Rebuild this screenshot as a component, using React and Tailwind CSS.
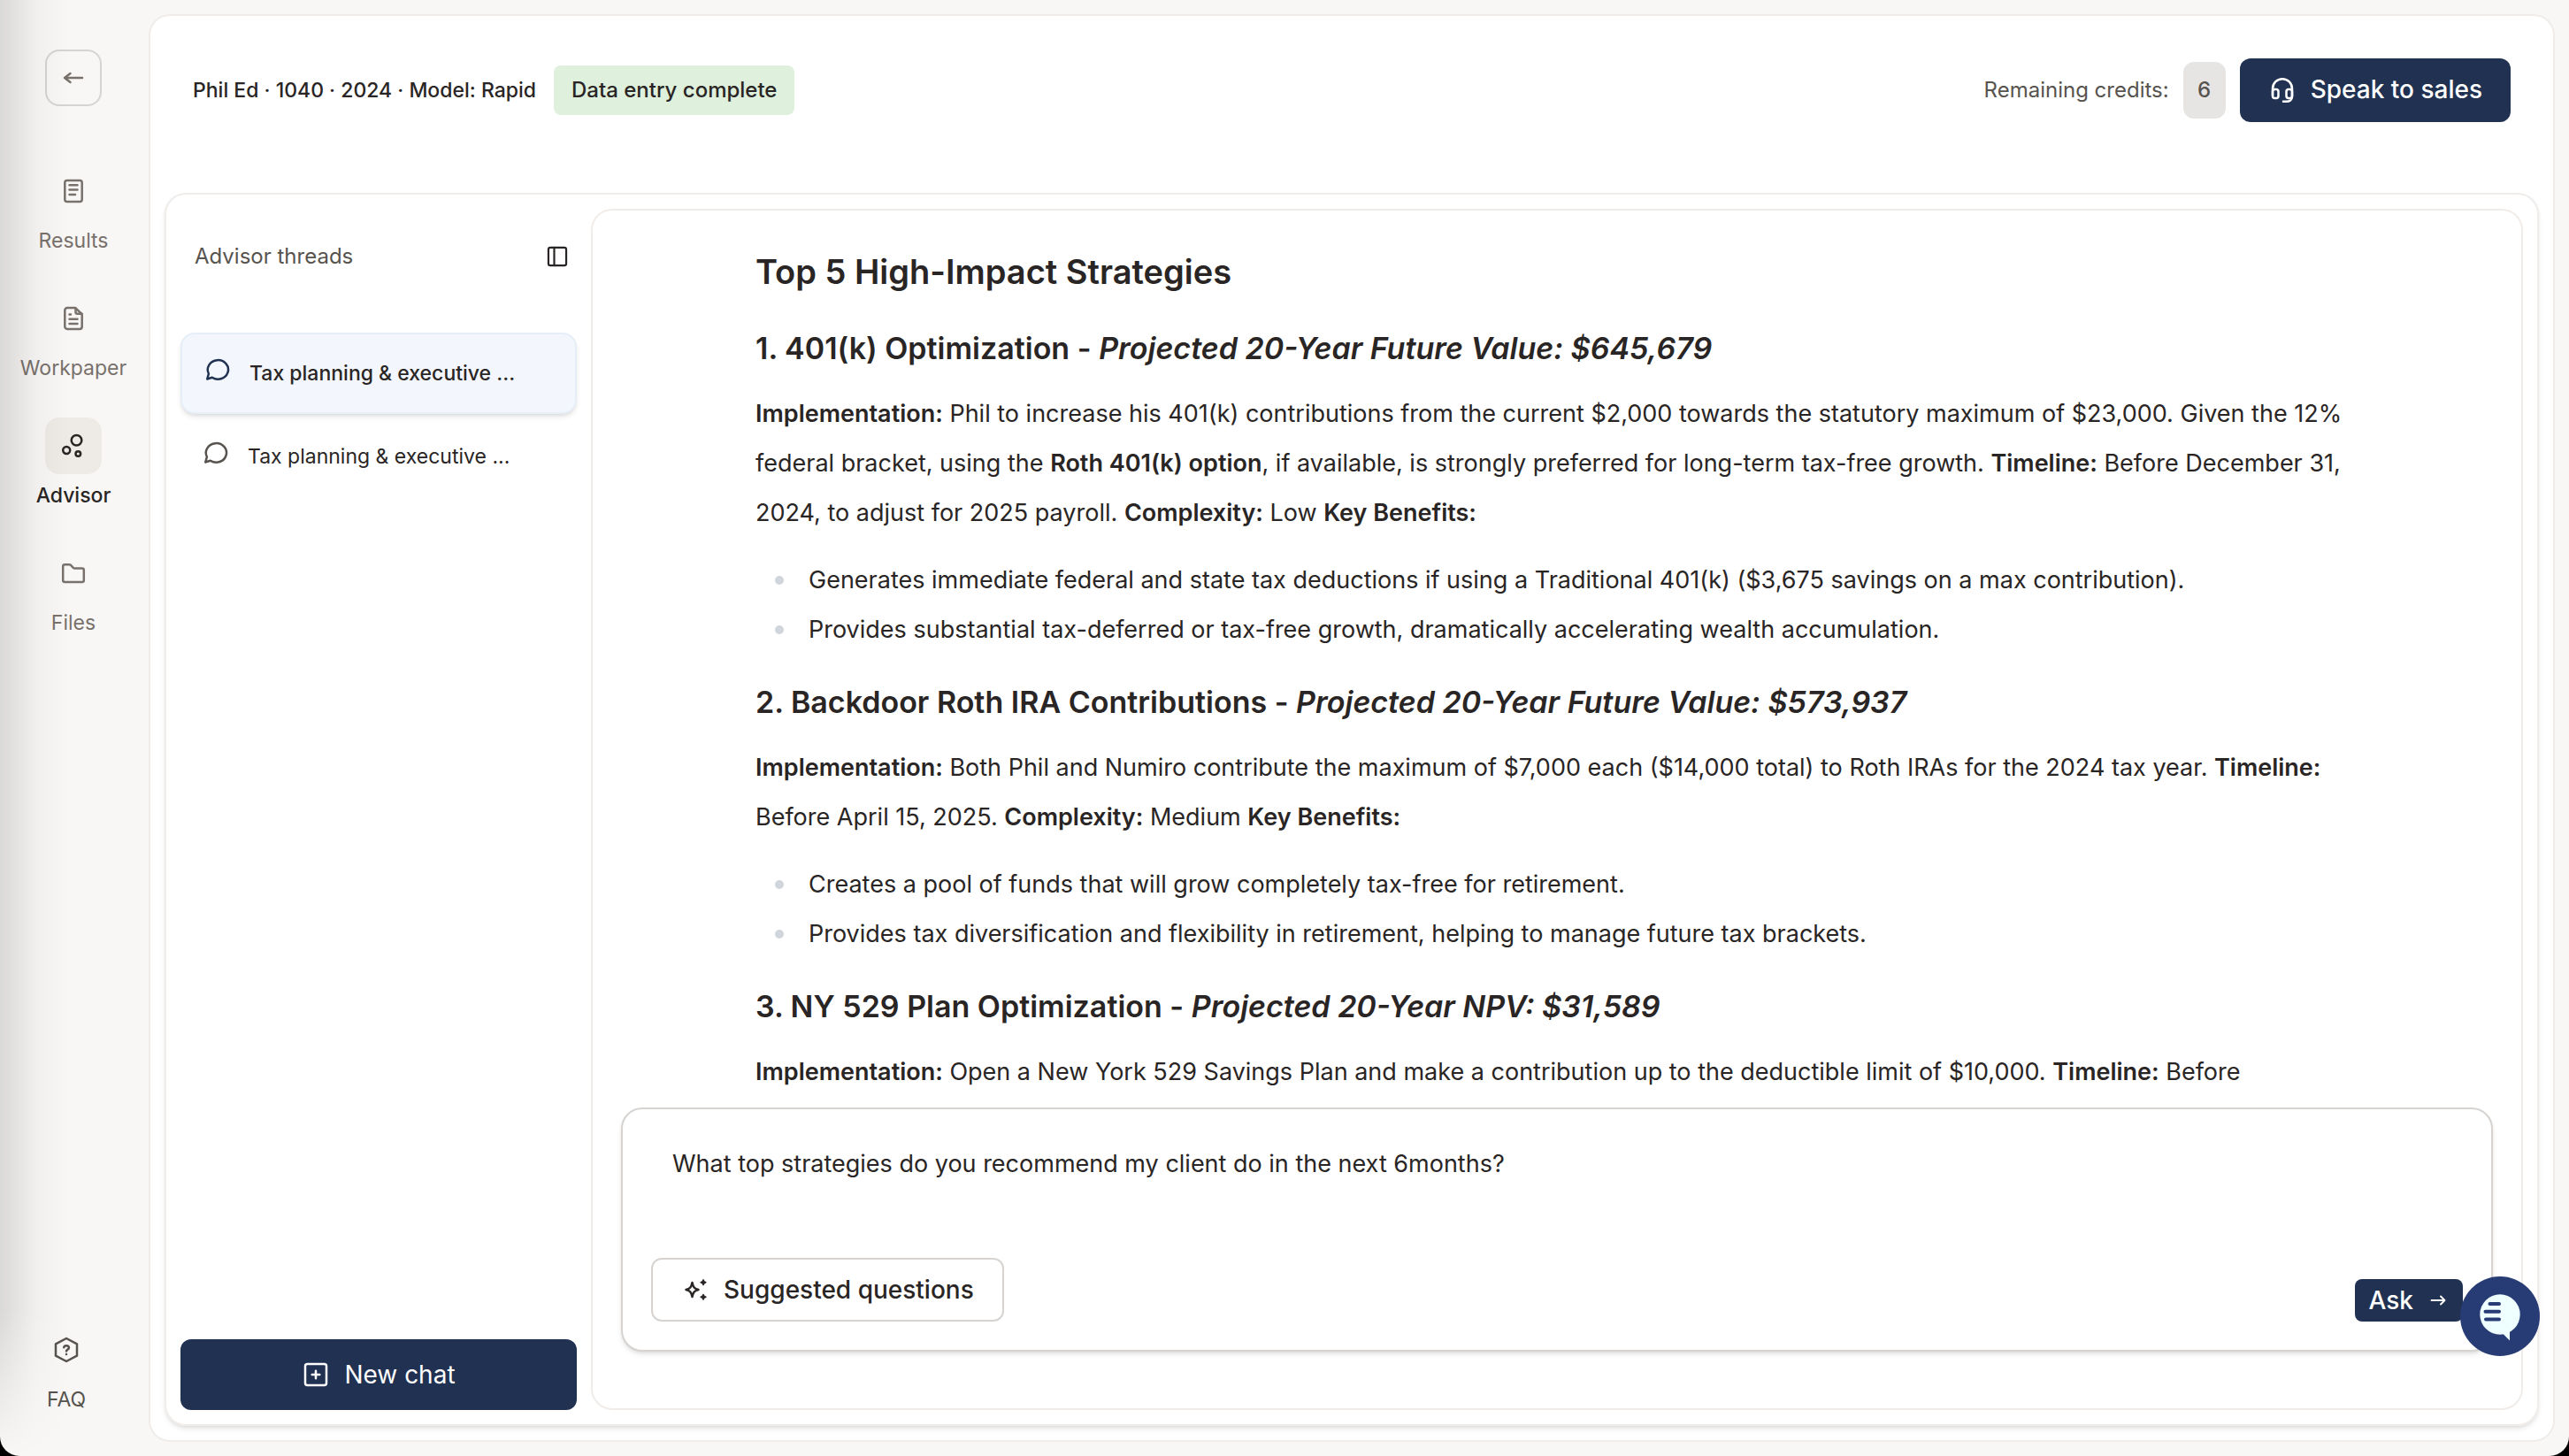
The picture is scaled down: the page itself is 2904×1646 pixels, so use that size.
import { useState } from 'react';

const Icon = ({ children, className = 'size-8' }) => (
  <svg
    viewBox="0 0 32 32"
    fill="none"
    stroke="currentColor"
    strokeWidth="2.5"
    strokeLinecap="round"
    strokeLinejoin="round"
    aria-hidden="true"
    className={`shrink-0 ${className}`}
  >
    {children}
  </svg>
);

const BackIcon = () => (
  <Icon>
    <path d="M26 16H6M12.5 11 6 16l6.5 5" />
  </Icon>
);

const ResultsIcon = () => (
  <Icon>
    <rect x="6.3" y="4" width="19.4" height="24" rx="2.5" />
    <path d="M11.5 9.3h9M11.5 14.6h9M11.5 19.9h6.5" />
  </Icon>
);

const WorkpaperIcon = () => (
  <Icon>
    <path d="M18 4H9a2.7 2.7 0 0 0-2.7 2.7v18.6A2.7 2.7 0 0 0 9 28h14a2.7 2.7 0 0 0 2.7-2.7V11.2L18 4z" />
    <path d="M18.5 4.5v4.2a2 2 0 0 0 2 2h5M11.5 11.5H13M11.5 16.8h9M11.5 22h9" />
  </Icon>
);

const AdvisorIcon = () => (
  <Icon>
    <circle cx="19.5" cy="9.8" r="5.8" />
    <circle cx="8.2" cy="21" r="4" />
    <circle cx="21.3" cy="25" r="2.8" />
  </Icon>
);

const FilesIcon = () => (
  <Icon>
    <path d="M4.2 8.2a2 2 0 0 1 2-2h5.3a2 2 0 0 1 1.3.5l3 3.2a2 2 0 0 0 1.4.6h8.6a2 2 0 0 1 2 2v11.600a2 2 0 0 1-2 2H6.2a2 2 0 0 1-2-2z" />
  </Icon>
);

const FaqIcon = () => (
  <Icon>
    <path d="M16 3 28 9.3v13.4L16 29 4 22.7V9.3z" />
    <path d="M13.2 13.2c.3-1.3 1.4-2 2.8-2 1.6 0 2.9 1 2.9 2.5 0 1.9-2.9 2-2.9 3.8M16 21v.1" />
  </Icon>
);

const HeadsetIcon = () => (
  <Icon>
    <path d="M5 22v-7.5C5 8 9.8 3.2 16 3.2S27 8 27 14.5V23c0 4-3 5.8-6.500 5.8H17" />
    <rect x="5" y="15" width="6.5" height="10" rx="2.5" />
    <rect x="20.5" y="15" width="6.5" height="10" rx="2.5" />
  </Icon>
);

const PanelIcon = () => (
  <Icon className="size-7">
    <rect x="4.5" y="4.5" width="23" height="23" rx="2.5" />
    <path d="M12 4.5v23" />
  </Icon>
);

const ThreadIcon = () => (
  <Icon>
    <path d="M9.8 24.8 4.2 26.5l1.7-6A11.6 10.8 0 1 1 9.8 24.8z" />
  </Icon>
);

const NewChatIcon = () => (
  <Icon>
    <rect x="4" y="4" width="24" height="24" rx="2.5" />
    <path d="M16 11.7v8.6M11.7 16h8.6" />
  </Icon>
);

const SparkleIcon = () => (
  <Icon>
    <path d="M12.5 8c1 5 2.5 7 7 8-4.500 1-6 3-7 8-1-5-2.500-7-7-8 4.500-1 6-3 7-8z" />
    <path
      d="M25 4.8c.4 1.7 1.2 2.5 2.9 2.9-1.7.4-2.5 1.2-2.9 2.9-.4-1.7-1.2-2.5-2.9-2.9 1.7-.4 2.5-1.2 2.9-2.9zM25 21.4c.4 1.7 1.2 2.5 2.9 2.9-1.7.4-2.5 1.2-2.9 2.9-.4-1.7-1.2-2.5-2.9-2.9 1.7-.4 2.5-1.2 2.9-2.9z"
      fill="currentColor"
      strokeWidth="1.5"
    />
  </Icon>
);

const AskIcon = () => (
  <Icon className="size-6">
    <path d="M6 16h20M20 10l6 6-6 6" />
  </Icon>
);

const navItems = [
  { label: 'Results', icon: ResultsIcon },
  { label: 'Workpaper', icon: WorkpaperIcon },
  { label: 'Advisor', icon: AdvisorIcon, active: true },
  { label: 'Files', icon: FilesIcon },
];

const threads = [
  { id: 1, title: 'Tax planning & executive ...' },
  { id: 2, title: 'Tax planning & executive ...' },
];

const Sidebar = () => (
  <aside className="flex w-42 shrink-0 flex-col items-center pt-14 pr-0.5 pb-12 text-[23px] leading-8 text-[#78716c]">
    <button
      type="button"
      aria-label="Back"
      className="flex size-16 items-center justify-center rounded-2xl border-2 border-[#d6d3d1]"
    >
      <BackIcon />
    </button>
    <nav className="mt-16 flex flex-col items-center gap-10">
      {navItems.map(({ label, icon: NavIcon, active }) => (
        <a
          key={label}
          href="#"
          className={`flex flex-col items-center gap-2 ${active ? 'font-medium text-[#292524]' : ''}`}
        >
          <span className={`flex size-16 items-center justify-center rounded-2xl ${active ? 'bg-[#eeebe6]' : ''}`}>
            <NavIcon />
          </span>
          {label}
        </a>
      ))}
    </nav>
    <a href="#" className="mt-auto flex w-[150px] flex-col items-center gap-2 self-start text-[#57534e]">
      <span className="flex size-16 items-center justify-center">
        <FaqIcon />
      </span>
      FAQ
    </a>
  </aside>
);

const Header = () => (
  <header className="flex h-[72px] items-center justify-between px-12 font-medium">
    <div className="flex items-center gap-5">
      <p className="text-[23px]">Phil Ed · 1040 · 2024 · Model: Rapid</p>
      <span className="flex h-14 items-center rounded-lg bg-[#dff0dd] px-5 text-2xl">Data entry complete</span>
    </div>
    <div className="flex items-center gap-4 text-2xl">
      <span className="font-normal text-[#57534e]">Remaining credits:</span>
      <span className="flex h-16 w-12 items-center justify-center rounded-xl bg-[#e7e5e4] text-[#57534e]">6</span>
      <button
        type="button"
        className="flex h-[72px] items-center gap-4 rounded-xl bg-[#203151] px-8 text-[28px] text-white"
      >
        <HeadsetIcon />
        Speak to sales
      </button>
    </div>
  </header>
);

const Threads = () => {
  const [selected, setSelected] = useState(1);

  return (
    <section className="flex w-112 shrink-0 flex-col">
      <div className="flex h-[108px] items-center justify-between pr-2 pl-4">
        <h2 className="text-2xl text-[#57534e]">Advisor threads</h2>
        <button type="button" aria-label="Toggle threads">
          <PanelIcon />
        </button>
      </div>
      <div className="mt-8 flex flex-col gap-1">
        {threads.map((thread) => (
          <button
            key={thread.id}
            type="button"
            onClick={() => setSelected(thread.id)}
            className={`flex items-center gap-5 rounded-2xl px-6 py-7 text-[23px] leading-8 ${
              thread.id === selected ? 'border-2 border-[#e6eef8] bg-[#f3f7fd] font-medium shadow-md' : ''
            }`}
          >
            <span className={`-mt-2 ${thread.id === selected ? 'text-[#203151]' : 'text-[#57534e]'}`}>
              <ThreadIcon />
            </span>
            {thread.title}
          </button>
        ))}
      </div>
      <button
        type="button"
        className="mt-auto flex h-20 items-center justify-center gap-4 rounded-xl bg-[#203151] text-[28px] text-white"
      >
        <NewChatIcon />
        New chat
      </button>
    </section>
  );
};

const StrategyTitle = ({ title, value }) => (
  <h3 className="mt-7 mb-5 text-[34px] leading-[52px] font-semibold first-of-type:mt-8">
    {title} - <em>{value}</em>
  </h3>
);

const Benefits = ({ items }) => (
  <ul className="mt-5 pl-[22px]">
    {items.map((item) => (
      <li
        key={item}
        className="flex items-center gap-7 before:size-2.5 before:shrink-0 before:rounded-full before:bg-gray-300"
      >
        {item}
      </li>
    ))}
  </ul>
);

const Answer = () => (
  <article className="mx-auto w-full max-w-[1812px] pt-10 text-[27px] leading-14 [&_strong]:font-semibold">
    <h2 className="text-[38px] leading-[58px] font-semibold">Top 5 High-Impact Strategies</h2>

    <StrategyTitle title="1. 401(k) Optimization" value="Projected 20-Year Future Value: $645,679" />
    <p>
      <strong>Implementation:</strong> Phil to increase his 401(k) contributions from the current $2,000 towards the
      statutory maximum of $23,000. Given the 12% federal bracket, using the <strong>Roth 401(k) option</strong>, if
      available, is strongly preferred for long-term tax-free growth. <strong>Timeline:</strong> Before December 31,
      2024, to adjust for 2025 payroll. <strong>Complexity:</strong> Low <strong>Key Benefits:</strong>
    </p>
    <Benefits
      items={[
        'Generates immediate federal and state tax deductions if using a Traditional 401(k) ($3,675 savings on a max contribution).',
        'Provides substantial tax-deferred or tax-free growth, dramatically accelerating wealth accumulation.',
      ]}
    />

    <StrategyTitle title="2. Backdoor Roth IRA Contributions" value="Projected 20-Year Future Value: $573,937" />
    <p>
      <strong>Implementation:</strong> Both Phil and Numiro contribute the maximum of $7,000 each ($14,000 total) to
      Roth IRAs for the 2024 tax year. <strong>Timeline:</strong> Before April 15, 2025. <strong>Complexity:</strong>{' '}
      Medium <strong>Key Benefits:</strong>
    </p>
    <Benefits
      items={[
        'Creates a pool of funds that will grow completely tax-free for retirement.',
        'Provides tax diversification and flexibility in retirement, helping to manage future tax brackets.',
      ]}
    />

    <StrategyTitle title="3. NY 529 Plan Optimization" value="Projected 20-Year NPV: $31,589" />
    <p>
      <strong>Implementation:</strong> Open a New York 529 Savings Plan and make a contribution up to the deductible
      limit of $10,000. <strong>Timeline:</strong> Before
    </p>
  </article>
);

const Composer = () => {
  const [question, setQuestion] = useState('What top strategies do you recommend my client do in the next 6months?');

  return (
    <form
      onSubmit={(e) => e.preventDefault()}
      className="mx-8 mb-16 flex shrink-0 flex-col rounded-3xl border-2 border-[#d6d3d1] bg-white shadow-md"
    >
      <textarea
        aria-label="Ask the advisor"
        rows="2"
        value={question}
        onChange={(e) => setQuestion(e.target.value)}
        className="h-[168px] w-full resize-none px-14 pt-[34px] text-[27px] leading-14 outline-none"
      />
      <div className="flex items-end justify-between px-8 pb-8">
        <button
          type="button"
          className="flex h-[72px] items-center gap-4 rounded-xl border-2 border-[#d6d3d1] px-8 text-[28px] font-medium"
        >
          <SparkleIcon />
          Suggested questions
        </button>
        <button
          type="submit"
          className="flex h-12 items-center gap-4 rounded-lg bg-[#203151] px-4 text-[28px] font-medium text-white"
        >
          Ask
          <AskIcon />
        </button>
      </div>
    </form>
  );
};

const ChatWidget = () => (
  <button type="button" aria-label="Open support chat" className="fixed right-[33px] bottom-[113px] size-[90px]">
    <svg viewBox="0 0 90 90" aria-hidden="true">
      <circle cx="45" cy="45" r="45" fill="#273b75" />
      <circle cx="45" cy="43" r="22.7" fill="#effefe" />
      <path d="M47.5 64 56 72.5V60z" fill="#effefe" />
      <path d="M33.5 31H44M28.5 39.8H44M29 48.5H44" stroke="#273b75" strokeWidth="4" strokeLinecap="round" />
    </svg>
  </button>
);

export default function App() {
  return (
    <div className="h-screen bg-black font-['Inter',sans-serif] text-[#292524]">
      <div className="relative flex h-full overflow-hidden rounded-b-[22px] bg-[#f8f7f5]">
        {/* shade falling in from the left edge of the window */}
        <div className="pointer-events-none absolute inset-y-0 left-0 w-20 bg-linear-to-r from-black/12 via-black/3 to-transparent mask-b-from-90% mask-b-to-100%" />
        <Sidebar />
        <main className="my-4 mr-4 flex min-w-0 flex-1 flex-col rounded-3xl border-2 border-[#f0ece9] bg-white pt-12">
          <Header />
          <div className="mx-4 mt-20 mb-4 flex min-h-0 flex-1 gap-4 rounded-3xl border-2 border-[#f0ece9] p-4 shadow-md">
            <Threads />
            <section className="flex min-w-0 flex-1 flex-col rounded-3xl border-2 border-[#f0ece9]">
              <div className="min-h-0 flex-1 overflow-hidden">
                <Answer />
              </div>
              <Composer />
            </section>
          </div>
        </main>
      </div>
      <ChatWidget />
    </div>
  );
}
